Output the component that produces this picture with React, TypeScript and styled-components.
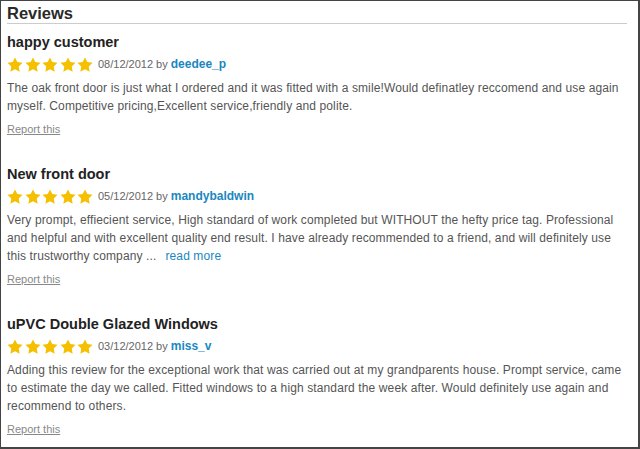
import styled, { createGlobalStyle } from "styled-components";

const GlobalStyle = createGlobalStyle`
  html, body {
    margin: 0;
    padding: 0;
    background: #ffffff;
  }
`;

const Frame = styled.div`
  width: 640px;
  height: 449px;
  box-sizing: border-box;
  border-style: solid;
  border-color: #444444;
  border-width: 1px 2px 2px 1px;
  padding: 3px 0 0 6px;
  background: #ffffff;
  font-family: "Liberation Sans", Arial, sans-serif;
  overflow: hidden;
`;

const Content = styled.div`
  width: 620px;
`;

const Heading = styled.h2`
  margin: 0 0 9px;
  font-size: 16.5px;
  line-height: 19px;
  font-weight: bold;
  color: #2a2a2a;
  border-bottom: 1px solid #cccccc;
`;

const Review = styled.div`
  margin-bottom: 29px;
`;

const Title = styled.h3`
  margin: 0 0 4px;
  font-size: 14.5px;
  line-height: 18px;
  font-weight: bold;
  color: #222222;
`;

const MetaRow = styled.div`
  display: flex;
  align-items: center;
  height: 18px;
  margin-bottom: 6px;
  font-size: 11px;
  color: #666666;
`;

const Stars = styled.span`
  display: flex;
  gap: 1.5px;
  margin-right: 5px;
`;

const Author = styled.a`
  font-size: 12px;
  font-weight: bold;
  color: #1a87c0;
  text-decoration: none;
  margin-left: 3px;
`;

const Body = styled.p`
  margin: 0 0 7px;
  font-size: 12px;
  line-height: 18px;
  letter-spacing: 0.12px;
  color: #555555;
`;

const ReadMore = styled.a`
  color: #1a87c0;
  text-decoration: none;
  margin-left: 9px;
`;

const Report = styled.a`
  display: block;
  width: fit-content;
  font-size: 11px;
  line-height: 14px;
  color: #888888;
  text-decoration: underline;
`;

const Star = () => (
  <svg width="16" height="15" viewBox="0 0 24 23">
    <path
      d="M12 0.6l3.55 7.2 7.95 1.15-5.75 5.6 1.36 7.92L12 18.73 4.89 22.47l1.36-7.92L0.5 8.95l7.95-1.15z"
      fill="#f5c000"
    />
  </svg>
);

type ReviewData = {
  title: string;
  date: string;
  author: string;
  text: string;
  more?: boolean;
};

const reviews: ReviewData[] = [
  {
    title: "happy customer",
    date: "08/12/2012",
    author: "deedee_p",
    text: "The oak front door is just what I ordered and it was fitted with a smile!Would definatley reccomend and use again myself. Competitive pricing,Excellent service,friendly and polite.",
  },
  {
    title: "New front door",
    date: "05/12/2012",
    author: "mandybaldwin",
    text: "Very prompt, effiecient service, High standard of work completed but WITHOUT the hefty price tag. Professional and helpful and with excellent quality end result. I have already recommended to a friend, and will definitely use this trustworthy company ...",
    more: true,
  },
  {
    title: "uPVC Double Glazed Windows",
    date: "03/12/2012",
    author: "miss_v",
    text: "Adding this review for the exceptional work that was carried out at my grandparents house. Prompt service, came to estimate the day we called. Fitted windows to a high standard the week after. Would definitely use again and recommend to others.",
  },
];

export default function App() {
  return (
    <>
      <GlobalStyle />
      <Frame>
        <Content>
          <Heading>Reviews</Heading>
          {reviews.map((r) => (
            <Review key={r.author}>
              <Title>{r.title}</Title>
              <MetaRow>
                <Stars>
                  {[0, 1, 2, 3, 4].map((i) => (
                    <Star key={i} />
                  ))}
                </Stars>
                {r.date} by
                <Author href="#">{r.author}</Author>
              </MetaRow>
              <Body>
                {r.text}
                {r.more && <ReadMore href="#">read more</ReadMore>}
              </Body>
              <Report href="#">Report this</Report>
            </Review>
          ))}
        </Content>
      </Frame>
    </>
  );
}
